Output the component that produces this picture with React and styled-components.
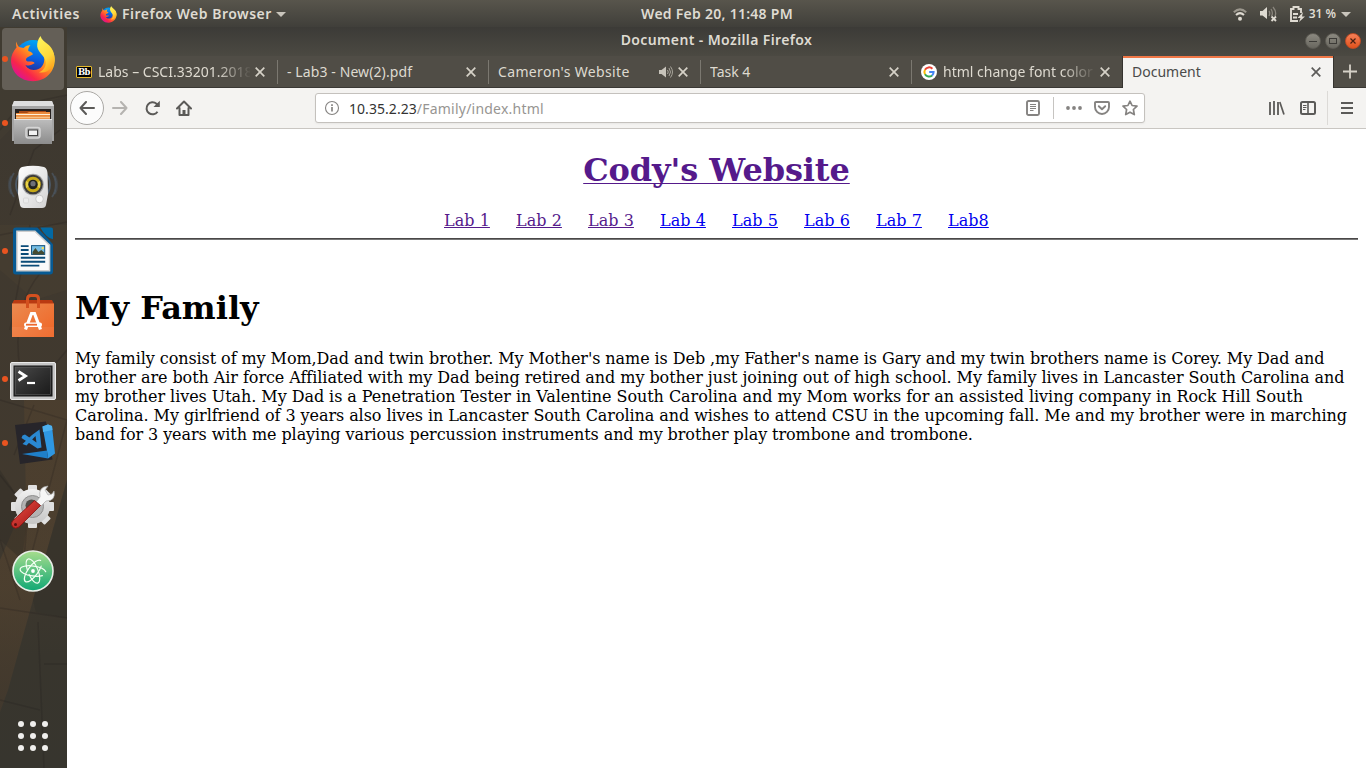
import React from "react";
import styled, { createGlobalStyle } from "styled-components";

const GlobalStyle = createGlobalStyle`
  html, body { margin: 0; padding: 0; overflow: hidden; background: #fff; }
  * { box-sizing: border-box; }
  svg { display: block; flex: none; }
`;

const Desktop = styled.div`
  width: 1366px;
  height: 768px;
  display: flex;
  flex-direction: column;
  overflow: hidden;
  font-family: "Noto Sans", "Open Sans", sans-serif;
`;

/* ---------- top panel ---------- */
const Panel = styled.header`
  height: 27px;
  flex: none;
  display: grid;
  grid-template-columns: 530px 374px 1fr;
  align-items: center;
  background: linear-gradient(#58554c, #403f3a);
  color: #dfdbd2;
  font-weight: 600;
  line-height: 26px;
  white-space: nowrap;
`;
const PanelLeft = styled.div`
  display: flex;
  align-items: center;
  padding-left: 12px;
`;
const PanelText = styled.span`
  letter-spacing: ${(p) => p.$ls || 0}px;
  width: ${(p) => (p.$w ? p.$w + "px" : "auto")};
  margin-left: ${(p) => p.$ml || 0}px;
  font-size: ${(p) => p.$size || 14}px;
`;
const Clock = styled.div`
  text-align: center;
  padding-bottom: 1px;
`;
const PanelRight = styled.div`
  display: flex;
  align-items: center;
  justify-content: flex-end;
  padding-right: 15px;
`;
const Arrow = styled.i`
  border: 5px solid transparent;
  border-top-color: #c9c5bc;
  border-bottom: 0;
  margin-left: ${(p) => p.$ml}px;
`;
const Gap = styled.span`
  width: ${(p) => p.$w}px;
  flex: none;
`;

/* ---------- dock ---------- */
const Body = styled.div`
  flex: 1;
  display: flex;
  min-height: 0;
`;
const Dock = styled.nav`
  width: 67px;
  flex: none;
  display: flex;
  flex-direction: column;
  position: relative;
  background: linear-gradient(#3c3831, #40392f 30%, #41392e 65%, #38352d 85%, #37352e);
`;
const Wall = styled.svg`
  position: absolute;
  inset: 0;
`;
const DockItem = styled.div`
  height: 64px;
  width: 66px;
  position: relative;
  display: flex;
  align-items: center;
  justify-content: center;
  padding-top: ${(p) => p.$drop || 0}px;
  &::before {
    content: "";
    display: ${(p) => (p.$active ? "block" : "none")};
    position: absolute;
    left: 2px;
    top: 1px;
    width: 62px;
    height: 62px;
    border-radius: 4px;
    background: rgba(255, 255, 255, 0.19);
  }
  &::after {
    content: "";
    display: ${(p) => (p.$running ? "block" : "none")};
    position: absolute;
    left: 2px;
    top: 29px;
    width: 6px;
    height: 6px;
    border-radius: 3px;
    background: #e95420;
  }
  svg { position: relative; }
`;
const AppGrid = styled.div`
  margin-top: auto;
  margin-bottom: 17px;
  margin-left: 18px;
  position: relative;
  display: grid;
  grid-template-columns: repeat(3, 6px);
  gap: 6px;
`;
const GridDot = styled.i`
  width: 6px;
  height: 6px;
  border-radius: 50%;
  background: #f0efed;
`;

/* ---------- browser window ---------- */
const Window = styled.main`
  flex: 1;
  min-width: 0;
  display: flex;
  flex-direction: column;
  background: #fff;
`;
const TitleBar = styled.div`
  height: 29px;
  flex: none;
  display: grid;
  grid-template-columns: 1fr auto 1fr;
  align-items: center;
  background: linear-gradient(#3c3b37, #4b4942);
  color: #dfdbd2;
  font-size: 14px;
  font-weight: 600;
`;
const WindowTitle = styled.span`
  letter-spacing: ${(p) => p.$ls}px;
  line-height: 26px;
  padding-bottom: 3px;
  white-space: nowrap;
`;
const WindowButtons = styled.div`
  display: flex;
  justify-content: flex-end;
  gap: 4px;
  padding-right: 5px;
  padding-bottom: 1px;
`;
const RoundButton = styled.span`
  width: 16px;
  height: 16px;
  border-radius: 50%;
  border: 1px solid ${(p) => (p.$close ? "#c04c25" : "#5d5b54")};
  background: ${(p) =>
    p.$close ? "linear-gradient(#f58058, #e2521c)" : "linear-gradient(#8b8980, #69675f)"};
  display: flex;
  align-items: center;
  justify-content: center;
`;
const Tabs = styled.div`
  height: 32px;
  flex: none;
  display: flex;
  background: #504d46;
  box-shadow: inset 0 -1px #3a3834;
`;
const Tab = styled.div`
  width: ${(p) => p.$w}px;
  flex: none;
  height: 32px;
  display: flex;
  align-items: center;
  padding: 0 ${(p) => p.$pr || 12}px 0 9px;
  position: relative;
  font-size: 14px;
  white-space: nowrap;
  color: ${(p) => (p.$active ? "#4a4a4a" : "#dedad0")};
  background: ${(p) => (p.$active ? "#f4f3f1" : "transparent")};
  border-left: ${(p) => (p.$active ? "1px solid #35332f" : "0")};
  border-right: ${(p) => (p.$active ? "1px solid #35332f" : "0")};
  box-shadow: ${(p) => (p.$active ? "inset 0 2px #f07746" : "none")};
  &::before {
    content: "";
    display: ${(p) => (p.$sep ? "block" : "none")};
    position: absolute;
    left: -1px;
    top: 4px;
    width: 1px;
    height: 24px;
    background: #7b7870;
  }
`;
const TabLabel = styled.span`
  flex: 1;
  min-width: 0;
  overflow: hidden;
  line-height: 20px;
  letter-spacing: ${(p) => p.$ls || 0}px;
  margin-left: ${(p) => p.$ml || 0}px;
  -webkit-mask-image: ${(p) =>
    p.$fade ? "linear-gradient(90deg, #000 78%, transparent 101%)" : "none"};
  margin-right: 5px;
`;
const BbIcon = styled.span`
  width: 16px;
  height: 12px;
  background: #000;
  border: 1px solid #e5b92c;
  border-radius: 1px;
  color: #fff;
  font: bold 8.5px/10px "DejaVu Serif", serif;
  letter-spacing: -0.5px;
  text-align: center;
`;

const Toolbar = styled.div`
  height: 41px;
  flex: none;
  display: flex;
  align-items: center;
  background: #f4f3f1;
  border-bottom: 1px solid #c9c6c2;
  padding-left: 3px;
`;
const BackButton = styled.span`
  width: 34px;
  height: 34px;
  border-radius: 50%;
  border: 1px solid #aaa8a5;
  background: #fcfcfc;
  display: flex;
  align-items: center;
  justify-content: center;
`;
const UrlBar = styled.div`
  width: 830px;
  height: 30px;
  margin-left: 123px;
  border: 1px solid #c4c1bd;
  border-radius: 3px;
  background: #fff;
  display: flex;
  align-items: center;
  padding: 0 6px 0 8px;
  box-shadow: 0 1px 2px rgba(0, 0, 0, 0.05);
`;
const Url = styled.span`
  flex: 1;
  margin-left: 9px;
  padding-top: 1px;
  font-size: 14px;
  line-height: 20px;
  color: #979592;
  letter-spacing: ${(p) => p.$ls}px;
  white-space: nowrap;
  b { font-weight: 400; color: #333; letter-spacing: ${(p) => p.$hostLs}px; }
`;
const Rule = styled.i`
  width: 1px;
  height: ${(p) => p.$h}px;
  background: ${(p) => p.$c || "#c6c4c1"};
`;

/* ---------- web page ---------- */
const Page = styled.article`
  flex: 1;
  padding: 22px 8px 0;
  color: #000;
  font: 16px/19px "DejaVu Serif", serif;
`;
const SiteTitle = styled.h1`
  margin: 0;
  font-size: 32px;
  line-height: 39px;
  letter-spacing: -0.11px;
  text-align: center;
  color: #551a8b;
  text-decoration: underline 1px;
  text-underline-offset: 2px;
  text-decoration-skip-ink: none;
`;
const LabNav = styled.div`
  display: flex;
  justify-content: center;
  gap: 26px;
  margin-top: 21px;
`;
const LabLink = styled.a`
  color: ${(p) => (p.$visited ? "#551a8b" : "#0000ee")};
  text-decoration: underline;
  letter-spacing: 0.05px;
  width: ${(p) => p.$w}px;
  white-space: nowrap;
`;
const Divider = styled.hr`
  margin: 8px 0 0;
  height: 2px;
  border: 0;
  border-top: 1px solid #4a4848;
  background: #777;
`;
const Heading = styled.h1`
  margin: 49px 0 0;
  font-size: 32px;
  line-height: 38px;
`;
const Para = styled.p`
  margin: 22px 0 0;
`;
const Line = styled.span`
  display: block;
  white-space: nowrap;
  letter-spacing: ${(p) => p.$ls || 0}px;
`;

/* ---------- drawings ---------- */
const Firefox = ({ size, id }) => (
  <svg width={size} height={size} viewBox="0 0 46 46">
    <defs>
      <linearGradient id={id + "a"} x1="0.85" y1="0.1" x2="0.15" y2="0.85">
        <stop offset="0" stopColor="#fff44f" />
        <stop offset="0.3" stopColor="#ffb31a" />
        <stop offset="0.55" stopColor="#ff6a2a" />
        <stop offset="0.8" stopColor="#f8264a" />
        <stop offset="1" stopColor="#e0158a" />
      </linearGradient>
      <linearGradient id={id + "b"} x1="0.6" y1="0" x2="0.4" y2="1">
        <stop offset="0" stopColor="#00a8f5" />
        <stop offset="0.5" stopColor="#0a5fe0" />
        <stop offset="1" stopColor="#2a1a80" />
      </linearGradient>
      <linearGradient id={id + "c"} x1="0.3" y1="0" x2="0.7" y2="1">
        <stop offset="0" stopColor="#fff35a" />
        <stop offset="0.6" stopColor="#ffd83a" />
        <stop offset="1" stopColor="#ff9c1c" />
      </linearGradient>
    </defs>
    <circle cx="23" cy="22.500" r="18.500" fill={`url(#${id}b)`} />
    <path
      d="M6.500 5.500C5.800 8.200 6 9.800 6.600 11.300C3 15.500 1 20 1 25C1.500 36.500 10.500 45.200 23 45.200C35.500 45.200 44.600 36 44.800 24C44.800 18.500 42.500 14 39.800 11.500L34 20C35.500 29 30.500 34.200 23.500 34C19.500 33.800 16.500 31.500 15.500 29C19 30.500 22 29 24.500 27.300C24.500 25.500 21 25.600 17.500 25.600C15.500 25 15.500 22.500 17.200 21.500L22.800 18.500C23 16.500 20 15.500 18.300 15C18 13 18.800 11 20.500 9.300C17.500 9 15 10.300 13.500 12C12 11.500 10.500 11.200 9 11C7.500 9.500 6.800 7.500 6.500 5.500Z"
      fill={`url(#${id}a)`}
    />
    <path
      d="M30.500 0C28 3 27 7 27.200 10.500C28 17 35.500 20 35.800 26.500C36 31.500 32.500 35 29 36.300C38 38 44.500 31 44.500 22.500C44.300 15.500 41.800 11.500 37.500 8C34.500 5.500 31.500 3.500 30.500 0Z"
      fill={`url(#${id}c)`}
    />
  </svg>
);

const Files = () => (
  <svg width="44" height="46" viewBox="0 0 44 46">
    <defs>
      <linearGradient id="fl" x1="0" y1="0" x2="0" y2="1">
        <stop offset="0" stopColor="#bdbdbd" />
        <stop offset="1" stopColor="#8c8c8c" />
      </linearGradient>
    </defs>
    <path d="M3 1H41L43 6V41H1V6Z" fill="#a5a5a5" />
    <path d="M3 1H41L43 6H1Z" fill="#dedede" />
    <path d="M4 9H40V19H4Z" fill="#26211f" />
    <path d="M8 11H35V14H8Z" fill="#a84915" />
    <path d="M5 13H16L18 12H39V19H5Z" fill="#ea8a3c" />
    <path d="M5 14.500H39" stroke="#fff0d8" strokeWidth="1.200" />
    <path d="M5 17.500H39" stroke="#f7c286" strokeWidth="1.400" />
    <path d="M3 19H41V44H3Z" fill="url(#fl)" />
    <path d="M3 19.500H41" stroke="#e5e5e5" />
    <rect x="15" y="27.500" width="14" height="10.500" rx="2.500" fill="#aaa" stroke="#d6d6d6" strokeWidth="1.500" />
    <rect x="17.500" y="30" width="9" height="5.500" fill="#f2f2f2" stroke="#444" />
  </svg>
);

const Speaker = () => (
  <svg width="52" height="46" viewBox="0 0 52 46">
    <defs>
      <linearGradient id="sp" x1="0" y1="0" x2="1" y2="1">
        <stop offset="0" stopColor="#fff" />
        <stop offset="1" stopColor="#d2d2d2" />
      </linearGradient>
    </defs>
    <g fill="none" stroke="#5c7da3" strokeWidth="1.800">
      <g opacity="0.5"><circle cx="26" cy="20.500" r="17" strokeDasharray="32 21.400" strokeDashoffset="16" /></g>
      <path d="M7 9C2 16 2 26 7 33M45 9C50 16 50 26 45 33" opacity="0.32" />
      <path d="M4 12C1 18 1 24 4 30M48 12C51 18 51 24 48 30" opacity="0.2" />
    </g>
    <path d="M15 3Q26 0.500 37 3Q40 4 40.500 9L41 30L39 41Q38.500 44 35 44H17Q13.500 44 13 41L11 30L11.500 9Q12 4 15 3Z" fill="url(#sp)" />
    <circle cx="26" cy="20.500" r="10.800" fill="#a5a5a5" />
    <circle cx="26" cy="20.500" r="9.800" fill="#3c3c3c" />
    <circle cx="26" cy="20.500" r="7.800" fill="#c7a917" />
    <path d="M26 20.500L19 17V24ZM26 20.500L33 17V24Z" fill="#e8d34c" />
    <circle cx="26" cy="20.500" r="4.800" fill="#22231f" />
    <circle cx="26" cy="19.700" r="2.600" fill="#6e7078" />
    <circle cx="32.500" cy="35" r="3.800" fill="#f5f5f5" stroke="#c8c8c8" />
    <rect x="16.500" y="34" width="5" height="5" rx="1" fill="#ebebeb" stroke="#d8d8d8" />
  </svg>
);

const Writer = () => (
  <svg width="40" height="48" viewBox="0 0 41 48">
    <path d="M3 0H25L41 17V45Q41 48 38 48H3Q0 48 0 45V3Q0 0 3 0Z" fill="#075a93" />
    <path d="M28 0H39Q41 0 41 2V12Q34 11 28 0Z" fill="#0369a3" />
    <path d="M4 3.800H22.500L37.500 18V44.200H4Z" fill="#fafafa" stroke="#ccc" strokeWidth="1.500" />
    <path d="M8 19H16M8 23H16M8 27H16M8 31H33M8 35H33M8 39H27" stroke="#0b4c78" strokeWidth="2" />
    <rect x="19" y="18.500" width="13.500" height="9" fill="#76bde3" stroke="#12527f" />
    <path d="M20 27.500V25L23 21L26 25L29 23L32 25.500V27.500Z" fill="#454b31" />
    <circle cx="30.500" cy="21" r="1.200" fill="#ffdf50" />
  </svg>
);

const Software = () => (
  <svg width="44" height="46" viewBox="0 0 44 46">
    <defs>
      <linearGradient id="sw" x1="0" y1="0" x2="1" y2="1">
        <stop offset="0" stopColor="#eb8a50" />
        <stop offset="1" stopColor="#f06525" />
      </linearGradient>
    </defs>
    <path d="M3 8L1 12H43L41 8Z" fill="#b93a12" />
    <path d="M1 11.500H43V45H1Z" fill="url(#sw)" />
    <path d="M1 35H43V45H1Z" fill="#fff" opacity="0.06" />
    <path d="M16.500 16V7Q16.500 3.500 20 3.500H24Q27.500 3.500 27.500 7V16" fill="none" stroke="#d4501f" strokeWidth="3" />
    <path d="M14.500 37.500L20.500 21.500H23.500L29.500 37.500" fill="none" stroke="#fff" strokeWidth="3.200" />
    <rect x="13" y="30.500" width="18" height="4.500" rx="2" fill="#fff" />
    <path d="M15 32.700H26" stroke="#ed6930" strokeWidth="1.800" />
  </svg>
);

const TerminalIcon = () => (
  <svg width="46" height="38" viewBox="0 0 46 38">
    <defs>
      <linearGradient id="tm" x1="0" y1="0" x2="1" y2="1">
        <stop offset="0" stopColor="#4b4b4b" />
        <stop offset="0.500" stopColor="#303030" />
        <stop offset="1" stopColor="#191919" />
      </linearGradient>
    </defs>
    <rect x="0.500" y="0.500" width="45" height="37" rx="1.500" fill="#c6c6c6" stroke="#eaeaea" />
    <rect x="4" y="4" width="38" height="30" fill="url(#tm)" stroke="#141414" />
    <rect x="5.500" y="5.500" width="35" height="27" fill="none" stroke="#5b5b5b" strokeWidth="0.600" />
    <path d="M8.500 9.500L15.500 14L8.500 18.500" fill="none" stroke="#fff" strokeWidth="2.800" />
    <path d="M17 21H25" stroke="#fff" strokeWidth="2.200" />
  </svg>
);

const Code = () => (
  <svg width="44" height="46" viewBox="0 0 44 46">
    <path d="M4 5L35 1.500L41.500 39.500L9 44Z" fill="#27252a" />
    <path d="M31.500 6.500L37 4.500L41 6L44 33.500L37 38.500L36 31Z" fill="#2f97e2" />
    <path d="M31.500 6.500L37 4.500L41 6L41.500 10L32 12Z" fill="#4db0ef" />
    <path d="M11 34L36 30.500L37 38.500Z" fill="#1f7fc9" />
    <path
      d="M28.500 9.500L30.500 27.500L26.500 28.500L10.500 18L11.500 15.500L14 14.500L25.500 22.500L24.500 16L15.500 25.500L11.500 24L21 15Z"
      fill="#2a88d2"
    />
  </svg>
);

const Settings = () => (
  <svg width="46" height="46" viewBox="0 0 46 46">
    <defs>
      <linearGradient id="gr" x1="0" y1="0" x2="0" y2="1">
        <stop offset="0" stopColor="#f1f1f1" />
        <stop offset="1" stopColor="#c5c5c5" />
      </linearGradient>
      <linearGradient id="rd" x1="0" y1="0" x2="1" y2="1">
        <stop offset="0" stopColor="#ec5249" />
        <stop offset="1" stopColor="#9c0f0f" />
      </linearGradient>
    </defs>
    <g fill="#e0e0e0">
      {[0, 45, 90, 135].map((a) => (
        <rect key={a} x="18" y="1" width="9" height="43" rx="1" transform={`rotate(${a} 22.500 22.500)`} />
      ))}
      <circle cx="22.500" cy="22.500" r="17.500" fill="url(#gr)" />
    </g>
    <circle cx="22.500" cy="22.500" r="11" fill="#b3b3b3" stroke="#8f8f8f" />
    <circle cx="21.500" cy="21.500" r="6" fill="#514d48" />
    <path d="M26 18L30 13Q28 3 38 2L35 6L38 11L42 10L44 7Q46 17 36 17L31 22Z" fill="#f6f6f6" stroke="#aaa" strokeWidth="0.700" />
    <path d="M2.500 37L24.500 16.500L30.500 21.500L9 43Q5.500 45.500 2.800 43Q0 40 2.500 37Z" fill="url(#rd)" stroke="#87100e" strokeWidth="0.800" />
    <circle cx="5.500" cy="40.500" r="1.500" fill="#581010" />
  </svg>
);

const Atom = () => (
  <svg width="42" height="42" viewBox="0 0 42 42">
    <defs>
      <linearGradient id="at" x1="0" y1="0" x2="0" y2="1">
        <stop offset="0" stopColor="#a7dd8d" />
        <stop offset="1" stopColor="#10a874" />
      </linearGradient>
    </defs>
    <circle cx="21" cy="21" r="20" fill="url(#at)" stroke="#e9efe9" strokeWidth="1.600" />
    <g fill="none" stroke="#f4fff4" strokeWidth="1.200" strokeLinecap="round">
      <ellipse cx="21" cy="21" rx="13" ry="5" transform="rotate(8 21 21)" pathLength="100" strokeDasharray="90 10" strokeDashoffset="-8" />
      <ellipse cx="21" cy="21" rx="13" ry="5" transform="rotate(68 21 21)" pathLength="100" strokeDasharray="92 8" strokeDashoffset="-30" />
      <ellipse cx="21" cy="21" rx="13" ry="5" transform="rotate(126 21 21)" pathLength="100" strokeDasharray="90 10" strokeDashoffset="-60" />
    </g>
    <circle cx="21" cy="21" r="1.900" fill="#fff" />
  </svg>
);

const CloseX = ({ color = "#d5d1c7" }) => (
  <svg width="10" height="10" viewBox="0 0 10 10">
    <path d="M0.700 0.700L9.300 9.300M9.300 0.700L0.700 9.300" stroke={color} strokeWidth="1.700" />
  </svg>
);

const Google = () => (
  <svg width="16" height="16" viewBox="0 0 16 16">
    <circle cx="8" cy="8" r="8" fill="#fff" />
    <g fill="none" strokeWidth="2">
      <path d="M11.400 4.800A4.600 4.600 0 0 0 4 5.800" stroke="#ea4335" />
      <path d="M4 5.800A4.600 4.600 0 0 0 4 10.300" stroke="#fbbc05" />
      <path d="M4 10.300A4.600 4.600 0 0 0 11.100 11.400" stroke="#34a853" />
      <path d="M11.100 11.400A4.600 4.600 0 0 0 12.600 8H8.200" stroke="#4285f4" />
    </g>
  </svg>
);

const dockApps = [
  { icon: <Firefox size={46} id="ffd" />, running: true, active: true },
  { icon: <Files />, running: true },
  { icon: <Speaker /> },
  { icon: <Writer />, running: true },
  { icon: <Software />, drop: 0 },
  { icon: <TerminalIcon />, running: true, drop: 4 },
  { icon: <Code />, running: true },
  { icon: <Settings /> },
  { icon: <Atom /> },
];

const labs = ["Lab 1", "Lab 2", "Lab 3", "Lab 4", "Lab 5", "Lab 6", "Lab 7", "Lab8"];

const lines = [
  ["My family consist of my Mom,Dad and twin brother. My Mother's name is Deb ,my Father's name is Gary and my twin brothers name is Corey. My Dad and", -0.075],
  ["brother are both Air force Affiliated with my Dad being retired and my bother just joining out of high school. My family lives in Lancaster South Carolina and", -0.064],
  ["my brother lives Utah. My Dad is a Penetration Tester in Valentine South Carolina and my Mom works for an assisted living company in Rock Hill South", -0.061],
  ["Carolina. My girlfriend of 3 years also lives in Lancaster South Carolina and wishes to attend CSU in the upcoming fall. Me and my brother were in marching", -0.071],
  ["band for 3 years with me playing various percussion instruments and my brother play trombone and trombone.", -0.075],
];

export default function App() {
  return (
    <Desktop>
      <GlobalStyle />
      <Panel>
        <PanelLeft>
          <PanelText $w={88} $ls={0.55}>Activities</PanelText>
          <Firefox size={17} id="ffp" />
          <PanelText $ml={5} $ls={0.5}>Firefox Web Browser</PanelText>
          <Arrow $ml={4} />
        </PanelLeft>
        <Clock>
          <PanelText $ls={0.27}>Wed Feb 20, 11:48 PM</PanelText>
        </Clock>
        <PanelRight>
          <svg width="14" height="13" viewBox="0 0 14 13" fill="none" strokeWidth="2">
            <path d="M0.800 4.300Q7 -1.500 13.200 4.300" stroke="#9b978d" />
            <path d="M3 7Q7 3.300 11 7" stroke="#dfdbd2" />
            <circle cx="7" cy="10.700" r="2" fill="#dfdbd2" />
          </svg>
          <Gap $w={13} />
          <svg width="17" height="16" viewBox="0 0 17 16">
            <path d="M0 5H2.500L7 1V13L2.500 9.500H0Z" fill="#dfdbd2" />
            <path d="M9 5Q10.500 7 9 10M11 3Q13.500 7 11.500 10M13 1Q17 6 15 10" fill="none" stroke="#8a867d" strokeWidth="1.300" />
            <path d="M11.500 10.500L16 15M16 10.500L11.500 15" stroke="#dfdbd2" strokeWidth="1.800" />
          </svg>
          <Gap $w={13} />
          <svg width="16" height="17" viewBox="0 0 16 17">
            <path d="M8 15H1V3H3.500V1H8.500V3H11V7" fill="none" stroke="#dfdbd2" strokeWidth="1.900" />
            <path d="M3 8H8M3 11.500H7" stroke="#dfdbd2" strokeWidth="1.800" />
            <path d="M13 6L7.500 12H10.500L9 16L15 10.500H12Z" fill="#dfdbd2" />
          </svg>
          <PanelText $ml={3} $size={12}>31 %</PanelText>
          <Arrow $ml={5} />
        </PanelRight>
      </Panel>
      <Body>
        <Dock>
          <Wall width="67" height="741" viewBox="0 27 67 741">
            <defs>
              <linearGradient id="beam" x1="0" y1="0" x2="0" y2="1">
                <stop offset="0" stopColor="#54432f" stopOpacity="0.5" />
                <stop offset="0.6" stopColor="#54432f" stopOpacity="0.65" />
                <stop offset="1" stopColor="#4b3c2d" stopOpacity="0.5" />
              </linearGradient>
            </defs>
            <path d="M24 400H67V480L33 600L8 690L0 712V560L26 500Z" fill="url(#beam)" />
            <path d="M0 225H67V290L35 300L0 270Z" fill="#4c4232" opacity="0.4" />
            <path d="M0 27H67V95L30 110L0 140Z" fill="#4c4232" opacity="0.25" />
            <path d="M0 470L28 512L22 560L0 540Z" fill="#2c2822" opacity="0.35" />
            <path d="M67 480L33 600L36 612L67 618Z" fill="#33312a" opacity="0.55" />
            <g fill="none" stroke="#1f1d1a" strokeWidth="1.500" opacity="0.22">
              <path d="M0 130L20 105L67 95M10 215L34 150L60 130M0 235L67 222M30 225L10 330M48 265Q10 300 20 370M67 350L25 400M0 400L67 420M34 405L14 455M67 420L30 560M0 475L28 510L24 560M0 540L20 600M0 608L67 618M38 622L44 768M44 664H67M0 700L40 710" />
            </g>
          </Wall>
          {dockApps.map((a, i) => (
            <DockItem key={i} $running={a.running} $active={a.active} $drop={a.drop}>
              {a.icon}
            </DockItem>
          ))}
          <AppGrid>
            {Array.from({ length: 9 }, (_, i) => (
              <GridDot key={i} />
            ))}
          </AppGrid>
        </Dock>
        <Window>
          <TitleBar>
            <span />
            <WindowTitle $ls={0.38}>Document - Mozilla Firefox</WindowTitle>
            <WindowButtons>
              <RoundButton>
                <svg width="8" height="8"><path d="M0 4.500H8" stroke="#3c3b37" /></svg>
              </RoundButton>
              <RoundButton>
                <svg width="8" height="8"><rect x="0.500" y="1.500" width="7" height="5" fill="none" stroke="#3c3b37" /></svg>
              </RoundButton>
              <RoundButton $close>
                <svg width="6" height="6"><path d="M0.500 0.500L5.500 5.500M5.500 0.500L0.500 5.500" stroke="#4a2012" strokeWidth="1.200" /></svg>
              </RoundButton>
            </WindowButtons>
          </TitleBar>
          <Tabs>
            <Tab $w={211} $pr={13}>
              <BbIcon>Bb</BbIcon>
              <TabLabel $ml={6} $fade>Labs – CSCI.33201.2018</TabLabel>
              <CloseX />
            </Tab>
            <Tab $w={211} $pr={13} $sep>
              <TabLabel $ls={0.1}>- Lab3 - New(2).pdf</TabLabel>
              <CloseX />
            </Tab>
            <Tab $w={212} $pr={13} $sep>
              <TabLabel $ls={0.35}>Cameron's Website</TabLabel>
              <svg width="14" height="12" viewBox="0 0 14 12">
                <path d="M0 4H2.500L7 0.500V11.500L2.500 8H0Z" fill="#c7c3ba" />
                <path d="M8.500 4Q10 6 8.500 8M10 2Q13 6 10 10M11.500 0.500Q15.500 6 11.500 11.500" fill="none" stroke="#a9a59c" />
              </svg>
              <Gap $w={5} />
              <CloseX />
            </Tab>
            <Tab $w={211} $pr={13} $sep>
              <TabLabel>Task 4</TabLabel>
              <CloseX />
            </Tab>
            <Tab $w={210} $sep>
              <Google />
              <TabLabel $ml={6} $fade>html change font color</TabLabel>
              <CloseX />
            </Tab>
            <Tab $w={212} $active>
              <TabLabel>Document</TabLabel>
              <CloseX color="#5c5b59" />
            </Tab>
            <Gap $w={9} />
            <svg width="14" height="32" viewBox="0 0 14 32">
              <path d="M0 15.500H14M7 8.500V22.500" stroke="#d5d1c7" strokeWidth="1.800" />
            </svg>
          </Tabs>
          <Toolbar>
            <BackButton>
              <svg width="16" height="14" viewBox="0 0 16 14" fill="none" stroke="#5b5a58" strokeWidth="2" strokeLinecap="round" strokeLinejoin="round">
                <path d="M15 7H1.500M7 1L1.500 7L7 13" />
              </svg>
            </BackButton>
            <Gap $w={8} />
            <svg width="16" height="14" viewBox="0 0 16 14" fill="none" stroke="#b5b3b0" strokeWidth="2" strokeLinecap="round" strokeLinejoin="round">
              <path d="M1 7H14.500M9 1L14.500 7L9 13" />
            </svg>
            <Gap $w={16} />
            <svg width="17" height="16" viewBox="0 0 17 16" fill="none" stroke="#5b5a58" strokeWidth="2">
              <path d="M13.500 11.700A6 6 0 1 1 12.500 3.800L14 5.500" />
              <path d="M15.800 0.800V7H9.500Z" fill="#5b5a58" stroke="none" />
            </svg>
            <Gap $w={15} />
            <svg width="16" height="16" viewBox="0 0 16 16" fill="none" stroke="#5b5a58" strokeWidth="2" strokeLinejoin="round" strokeLinecap="round">
              <path d="M1 8.500L8 1.500L15 8.500M3.500 8V15H12.500V8" />
              <path d="M8 14.500V10" strokeWidth="3" strokeLinecap="butt" />
            </svg>
            <UrlBar>
              <svg width="16" height="16" viewBox="0 0 16 16">
                <circle cx="8" cy="8" r="6.500" fill="none" stroke="#858381" strokeWidth="1.100" />
                <path d="M8 7V11.500M8 4.200V5.900" stroke="#858381" strokeWidth="1.700" />
              </svg>
              <Url $ls={0.22} $hostLs={0.05}><b>10.35.2.23</b>/Family/index.html</Url>
              <svg width="14" height="16" viewBox="0 0 14 16">
                <rect x="1" y="1" width="12" height="14" rx="1.500" fill="none" stroke="#858381" strokeWidth="1.900" />
                <path d="M4 4.500H10M4 6.500H10M4 8.500H10M4 10.500H7.500" stroke="#858381" />
              </svg>
              <Gap $w={13} />
              <Rule $h={22} />
              <Gap $w={12} />
              <svg width="16" height="4"><g fill="#858381"><circle cx="2" cy="2" r="1.900" /><circle cx="8" cy="2" r="1.900" /><circle cx="14" cy="2" r="1.900" /></g></svg>
              <Gap $w={12} />
              <svg width="16" height="14" viewBox="0 0 16 14" fill="none" stroke="#858381" strokeWidth="1.900" strokeLinejoin="round" strokeLinecap="round">
                <path d="M2 1H14Q15 1 15 2V6A7 7 0 0 1 1 6V2Q1 1 2 1ZM4.800 5.200L8 8.200L11.200 5.200" />
              </svg>
              <Gap $w={12} />
              <svg width="16" height="16" viewBox="0 0 16 16" fill="none" stroke="#858381" strokeWidth="1.700" strokeLinejoin="round">
                <path d="M8 1.200L10.100 5.500L15 6.100L11.400 9.500L12.300 14.600L8 12.200L3.700 14.600L4.600 9.500L1 6.100L5.900 5.500Z" />
              </svg>
            </UrlBar>
            <Gap $w={124} />
            <svg width="16" height="14" viewBox="0 0 16 14">
              <path d="M1 1V14M5 0V14M9 1V14" stroke="#5b5a58" strokeWidth="1.800" />
              <path d="M10.800 1L15 13.500" stroke="#5b5a58" strokeWidth="1.700" />
            </svg>
            <Gap $w={15} />
            <svg width="16" height="14" viewBox="0 0 16 14">
              <rect x="1" y="1" width="14" height="12" rx="1.500" fill="none" stroke="#5b5a58" strokeWidth="2" />
              <path d="M8 1V13" stroke="#5b5a58" strokeWidth="1.600" />
              <path d="M3 4.500H6.500M3 6.500H6.500M3 8.500H5.500" stroke="#5b5a58" />
            </svg>
            <Gap $w={11} />
            <Rule $h={34} $c="#dcdad7" />
            <Gap $w={13} />
            <svg width="12" height="12"><path d="M0 1H12M0 6H12M0 11H12" stroke="#5b5a58" strokeWidth="2" /></svg>
          </Toolbar>
          <Page>
            <SiteTitle>Cody's Website</SiteTitle>
            <LabNav>
              {labs.map((l, i) => (
                <LabLink key={l} $visited={i < 3} $w={i < 7 ? 46 : 41}>{l}</LabLink>
              ))}
            </LabNav>
            <Divider />
            <Heading>My Family</Heading>
            <Para>
              {lines.map(([t, ls]) => (
                <Line key={t} $ls={ls}>{t}</Line>
              ))}
            </Para>
          </Page>
        </Window>
      </Body>
    </Desktop>
  );
}
